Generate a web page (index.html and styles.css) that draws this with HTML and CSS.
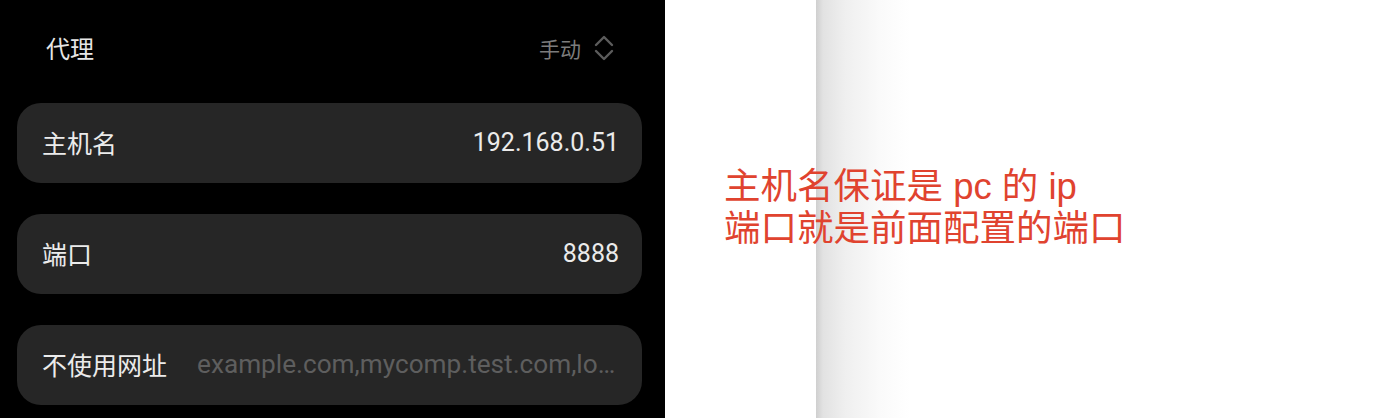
FILE: index.html
```html
<!DOCTYPE html>
<html lang="zh">
<head>
<meta charset="utf-8">
<title>代理</title>
<link rel="stylesheet" href="styles.css">
</head>
<body>
<div class="page">
  <section class="phone">
    <div class="header">
      <span class="header-title">代理</span>
      <span class="header-value">手动
        <svg class="chevron" width="20" height="28" viewBox="0 0 20 28" aria-hidden="true">
          <polyline points="2,11 10,3 18,11" />
          <polyline points="2,17 10,25 18,17" />
        </svg>
      </span>
    </div>
    <div class="cards">
      <div class="card">
        <span class="label">主机名</span>
        <span class="value">192.168.0.51</span>
      </div>
      <div class="card">
        <span class="label">端口</span>
        <span class="value">8888</span>
      </div>
      <div class="card">
        <span class="label">不使用网址</span>
        <span class="placeholder">example.com,mycomp.test.com,lo…</span>
      </div>
    </div>
  </section>
  <section class="canvas">
    <p class="note">主机名保证是 pc 的 ip<br>端口就是前面配置的端口</p>
  </section>
</div>
</body>
</html>
```
FILE: styles.css
```css
html, body {
  margin: 0;
  padding: 0;
  background: #ffffff;
}

.page {
  display: flex;
  width: 1398px;
  height: 418px;
  overflow: hidden;
}

.phone {
  width: 665px;
  flex: none;
  background: #000000;
  box-sizing: border-box;
  padding: 0 23px 0 17px;
  font-family: "Roboto", "Noto Sans CJK SC", sans-serif;
}

.header {
  height: 95px;
  display: flex;
  align-items: center;
  justify-content: space-between;
  padding: 0 28px 0 29px;
}

.header-title {
  font-family: "Noto Sans CJK SC", sans-serif;
  font-size: 24px;
  color: #e6e6e6;
}

.header-value {
  display: flex;
  align-items: center;
  gap: 13px;
  font-family: "Noto Sans CJK SC", sans-serif;
  font-size: 21px;
  color: #7c7c7c;
}

.chevron {
  display: block;
}

.chevron polyline {
  fill: none;
  stroke: #5c5c5c;
  stroke-width: 2.4;
  stroke-linecap: round;
  stroke-linejoin: round;
}

.cards {
  margin-top: 8px;
  display: flex;
  flex-direction: column;
  gap: 31px;
}

.card {
  height: 80px;
  border-radius: 24px;
  background: #262626;
  display: flex;
  align-items: center;
  padding: 0 23px 2px 25px;
  box-sizing: border-box;
  gap: 30px;
}

.label {
  flex: none;
  font-family: "Noto Sans CJK SC", sans-serif;
  font-size: 25px;
  color: #ebebeb;
}

.value {
  margin-left: auto;
  font-size: 25px;
  color: #ebebeb;
}

.placeholder {
  flex: 1;
  min-width: 0;
  white-space: nowrap;
  overflow: hidden;
  text-overflow: ellipsis;
  font-size: 26.2px;
  color: #5e5e5e;
}

.canvas {
  flex: 1;
  background: linear-gradient(to right,
    #ffffff 0,
    #ffffff 151px,
    #cfcfcf 151px,
    #e2e2e2 158px,
    #efefef 180px,
    #fafafa 215px,
    #ffffff 245px);
  padding: 166px 0 0 59px;
  box-sizing: border-box;
}

.note {
  margin: 0;
  font-family: "Liberation Sans", "Noto Sans CJK SC", sans-serif;
  font-size: 36.5px;
  line-height: 42px;
  color: #e0432f;
}
```
